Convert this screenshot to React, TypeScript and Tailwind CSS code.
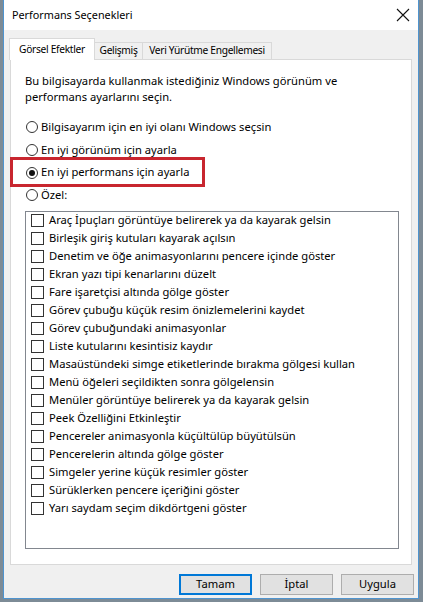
const effects = [
  "Araç İpuçları görüntüye belirerek ya da kayarak gelsin",
  "Birleşik giriş kutuları kayarak açılsın",
  "Denetim ve öğe animasyonlarını pencere içinde göster",
  "Ekran yazı tipi kenarlarını düzelt",
  "Fare işaretçisi altında gölge göster",
  "Görev çubuğu küçük resim önizlemelerini kaydet",
  "Görev çubuğundaki animasyonlar",
  "Liste kutularını kesintisiz kaydır",
  "Masaüstündeki simge etiketlerinde bırakma gölgesi kullan",
  "Menü öğeleri seçildikten sonra gölgelensin",
  "Menüler görüntüye belirerek ya da kayarak gelsin",
  "Peek Özelliğini Etkinleştir",
  "Pencereler animasyonla küçültülüp büyütülsün",
  "Pencerelerin altında gölge göster",
  "Simgeler yerine küçük resimler göster",
  "Sürüklerken pencere içeriğini göster",
  "Yarı saydam seçim dikdörtgeni göster",
];

const options = [
  { label: "Bilgisayarım için en iyi olanı Windows seçsin", checked: false },
  { label: "En iyi görünüm için ayarla", checked: false },
  { label: "En iyi performans için ayarla", checked: true },
  { label: "Özel:", checked: false },
];

const Radio = ({ checked }: { checked: boolean }) => (
  <div className="w-[12px] h-[12px] rounded-full border border-[#333] bg-white flex items-center justify-center shrink-0">
    {checked && <div className="w-[6px] h-[6px] rounded-full bg-[#111]" />}
  </div>
);

const App = () => {
  return (
    <div className="relative w-[423px] h-[602px] overflow-hidden bg-[#7d8b96] font-['Noto_Sans',sans-serif] text-[11.2px] text-black">
      <div className="ml-[3px] w-[416px] h-[599px] flex flex-col bg-[#f0f0f0] border-x border-b border-[#4f94cf]">
        {/* title bar */}
        <div className="h-[30px] bg-white flex items-center justify-between pl-[8px] pr-[6px]">
          <span className="text-[10.8px]">Performans Seçenekleri</span>
          <svg width="14" height="14" viewBox="0 0 14 14" className="mr-[2px]">
            <path d="M1 1 L13 13 M13 1 L1 13" stroke="#111" strokeWidth="1.1" />
          </svg>
        </div>

        {/* tabs */}
        <div className="flex items-end pl-[5px] pt-[7px] h-[29px] text-[10.2px] tracking-[-0.3px]">
          <div className="w-[86px] h-[22px] flex items-center justify-center bg-white border-x border-t border-[#d9d9d9] relative z-10 -mb-px">
            Görsel Efektler
          </div>
          <div className="w-[48px] h-[17px] flex items-center justify-center bg-[#f0f0f0] border-t border-r border-[#d9d9d9]">
            Gelişmiş
          </div>
          <div className="w-[129px] h-[17px] flex items-center justify-center bg-[#f0f0f0] border-t border-r border-[#d9d9d9]">
            Veri Yürütme Engellemesi
          </div>
        </div>

        {/* panel */}
        <div className="ml-[6px] w-[402px] h-[506px] bg-white border border-[#d9d9d9] pl-[14px] pt-[13px]">
          <p className="leading-[16px]">
            Bu bilgisayarda kullanmak istediğiniz Windows görünüm ve
            <br />
            performans ayarlarını seçin.
          </p>
          <div className="mt-[11px] flex flex-col">
            {options.map((o) => (
              <div key={o.label} className="h-[22.7px] flex items-center gap-[3px] pl-[1px]">
                <Radio checked={o.checked} />
                <span>{o.label}</span>
              </div>
            ))}
          </div>
          <div className="mt-[4px] w-[374px] h-[338px] border border-[#82878f] pl-[5px]">
            {effects.map((e) => (
              <div key={e} className="h-[18px] flex items-center gap-[5px]">
                <div className="w-[13px] h-[13px] border border-[#333] bg-white shrink-0" />
                <span>{e}</span>
              </div>
            ))}
          </div>
        </div>

        {/* buttons */}
        <div className="flex justify-end gap-[8px] pr-[4px] mt-[9px]">
          <button className="w-[73px] h-[21px] bg-[#e1e1e1] border-2 border-[#0078d7]">Tamam</button>
          <button className="w-[73px] h-[21px] bg-[#e1e1e1] border border-[#adadad]">İptal</button>
          <button className="w-[73px] h-[21px] bg-[#e1e1e1] border border-[#adadad]">Uygula</button>
        </div>
      </div>

      {/* red annotation box */}
      <div className="absolute left-[10px] top-[157px] w-[195px] h-[30px] border-[3px] border-[#c8262f]" />
    </div>
  );
};

export default App;
